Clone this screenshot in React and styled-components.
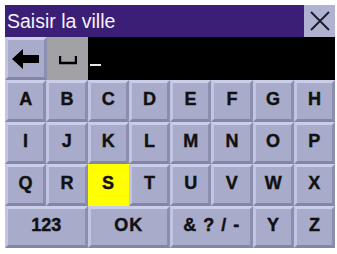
import React from "react";
import styled, { createGlobalStyle } from "styled-components";

const Global = createGlobalStyle`
  html, body { margin: 0; padding: 0; background: #ffffff; }
  body { font-family: "Liberation Sans", Arial, sans-serif; }
`;

const Screen = styled.div`
  width: 330px;
  margin: 5px 0 0 5px;
  display: flex;
  flex-direction: column;
`;

const TitleBar = styled.div`
  height: 32px;
  display: flex;
  background: #3b1f76;
`;

const Title = styled.div`
  flex: 1;
  color: #f4f2fa;
  font-size: 19.5px;
  line-height: 32px;
  padding-left: 2px;
`;

const CloseBox = styled.div`
  width: 31px;
  height: 32px;
  background: #b0b2d2;
  display: flex;
  align-items: center;
  justify-content: center;
`;

const InputRow = styled.div`
  height: 43px;
  display: flex;
  background: #000;
`;

const bevel = `
  background: #a8abc9;
  box-sizing: border-box;
  border-style: solid;
  border-width: 3px;
  border-color: #cbcee8 #8b8eae #8386a7 #c2c5e1;
`;

const BackKey = styled.div`
  ${bevel}
  width: 42px;
  display: flex;
  align-items: center;
  justify-content: center;
`;

const SpaceKey = styled.div`
  width: 41px;
  background: #a2a2a6;
  display: flex;
  align-items: center;
  justify-content: center;
  padding-top: 3px;
`;

const Field = styled.div`
  flex: 1;
  background: #000;
  position: relative;
`;

const Cursor = styled.div`
  position: absolute;
  left: 2px;
  top: 27px;
  width: 11px;
  height: 2px;
  background: #e8e8e8;
`;

const Grid = styled.div`
  display: grid;
  grid-template-columns: repeat(8, 1fr);
  grid-auto-rows: 42px;
  background: #a8abc9;
`;

const Key = styled.div`
  ${(p) =>
    p.$active
      ? `background: #ffff00; box-sizing: border-box; border: 3px solid #ffff00;`
      : bevel}
  grid-column: span ${(p) => p.$span || 1};
  display: flex;
  align-items: center;
  justify-content: center;
  padding-bottom: 3px;
  font-weight: bold;
  font-size: 18px;
  -webkit-text-stroke: 0.4px #111;
  color: #111;
  letter-spacing: ${(p) => (p.$wide ? "1px" : "0")};
  word-spacing: ${(p) => (p.$sym ? "2px" : "0")};
`;

const rows = [
  ["A", "B", "C", "D", "E", "F", "G", "H"],
  ["I", "J", "K", "L", "M", "N", "O", "P"],
  ["Q", "R", "S", "T", "U", "V", "W", "X"],
];

export default function App() {
  return (
    <>
      <Global />
      <Screen>
        <TitleBar>
          <Title>Saisir la ville</Title>
          <CloseBox>
            <svg width="22" height="22" viewBox="0 0 22 22">
              <path d="M2 2 L20 20 M20 2 L2 20" stroke="#1a1a2a" strokeWidth="1.8" />
            </svg>
          </CloseBox>
        </TitleBar>
        <InputRow>
          <BackKey>
            <svg width="28" height="20" viewBox="0 0 28 20">
              <path d="M0 10 L11 0 L11 6 L27 6 L27 14 L11 14 L11 20 Z" fill="#000" />
            </svg>
          </BackKey>
          <SpaceKey>
            <svg width="18" height="10" viewBox="0 0 18 10">
              <path d="M1 1 L1 8 L17 8 L17 1" stroke="#000" strokeWidth="2.4" fill="none" />
            </svg>
          </SpaceKey>
          <Field>
            <Cursor />
          </Field>
        </InputRow>
        <Grid>
          {rows.flat().map((k) => (
            <Key key={k} $active={k === "S"}>
              {k}
            </Key>
          ))}
          <Key $span={2}>123</Key>
          <Key $span={2} $wide>OK</Key>
          <Key $span={2} $sym>&amp; ? / -</Key>
          <Key>Y</Key>
          <Key>Z</Key>
        </Grid>
      </Screen>
    </>
  );
}
